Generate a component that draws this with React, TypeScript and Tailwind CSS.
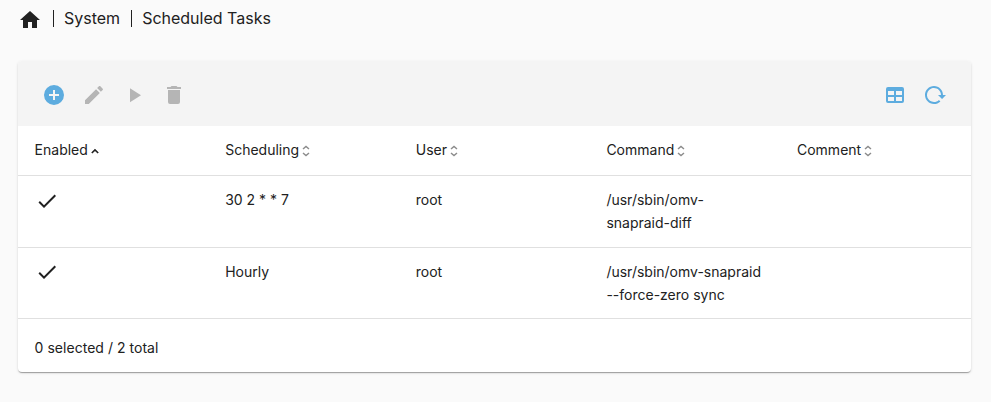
import React from "react";

const icons = {
  home: "M10,20V14H14V20H19V12H22L12,3L2,12H5V20H10Z",
  add: "M17,13H13V17H11V13H7V11H11V7H13V11H17M12,2A10,10 0 0,0 2,12A10,10 0 0,0 12,22A10,10 0 0,0 22,12A10,10 0 0,0 12,2Z",
  edit: "M20.71,7.04C21.1,6.65 21.1,6 20.71,5.63L18.37,3.29C18,2.9 17.35,2.9 16.96,3.29L15.12,5.12L18.87,8.87M3,17.25V21H6.75L17.81,9.93L14.06,6.18L3,17.25Z",
  play: "M8,5.14V19.14L19,12.14L8,5.14Z",
  remove: "M19,4H15.5L14.5,3H9.5L8.5,4H5V6H19M6,19A2,2 0 0,0 8,21H16A2,2 0 0,0 18,19V7H6V19Z",
  table: "M5,4H19A2,2 0 0,1 21,6V18A2,2 0 0,1 19,20H5A2,2 0 0,1 3,18V6A2,2 0 0,1 5,4M5,8V12H11V8H5M13,8V12H19V8H13M5,14V18H11V14H5M13,14V18H19V14H13Z",
  reload: "M2 12C2 16.97 6.03 21 11 21C13.39 21 15.68 20.06 17.4 18.4L15.9 16.9C14.63 18.25 12.86 19 11 19C4.76 19 1.64 11.46 6.05 7.05C10.46 2.64 18 5.77 18 12H15L19 16H19.1L23 12H20C20 7.03 15.97 3 11 3C6.03 3 2 7.03 2 12Z",
  check: "M21,7L9,19L3.5,13.5L4.91,12.09L9,16.17L19.59,5.59L21,7Z",
};

function Icon({ name, className = "" }: { name: keyof typeof icons; className?: string }) {
  return (
    <svg viewBox="0 0 24 24" fill="currentColor" className={`size-6 shrink-0 ${className}`}>
      <path d={icons[name]} />
    </svg>
  );
}

function SortIcon({ sorted }: { sorted: boolean }) {
  return sorted ? (
    <svg viewBox="0 0 8 12" fill="none" stroke="#212121" strokeWidth="1.6" className="ml-[3px] mt-[2px] h-3 w-2">
      <path d="M0.8 8L4 4.9L7.2 8" />
    </svg>
  ) : (
    <svg viewBox="0 0 8 12" fill="none" stroke="#8c8c8c" strokeWidth="1.4" className="ml-[3px] mt-[2px] h-3 w-2">
      <path d="M1 4L4 1.4L7 4M1 8L4 10.6L7 8" />
    </svg>
  );
}

const columns = ["Enabled", "Scheduling", "User", "Command", "Comment"];
const tasks = [
  { schedule: "30 2 * * 7", user: "root", command: ["/usr/sbin/omv-", "snapraid-diff"], height: "h-[72px]", iconOffset: "mt-px" },
  { schedule: "Hourly", user: "root", command: ["/usr/sbin/omv-snapraid", "--force-zero sync"], height: "h-[71px]", iconOffset: "mt-0" },
];

export default function App() {
  return (
    <div className="h-[402px] w-[991px] overflow-hidden bg-[#fafafa] font-['Inter',sans-serif] text-sm text-[#212121]">
      <nav className="flex h-[37px] items-center pl-[18px] text-base">
        <Icon name="home" className="mt-[3px]" />
        <span className="ml-[11px] h-[17px] w-px bg-[#212121]" />
        <span className="mb-[2px] ml-[10px]">System</span>
        <span className="ml-[11px] h-[17px] w-px bg-[#212121]" />
        <span className="mb-[2px] ml-[10px]">Scheduled Tasks</span>
      </nav>
      <main className="mx-[18px] mr-5 mt-6 h-[311px] overflow-hidden rounded bg-white shadow-[0_2px_1px_-1px_rgba(0,0,0,.2),0_1px_1px_0_rgba(0,0,0,.14),0_1px_3px_0_rgba(0,0,0,.12)]">
        <div className="flex h-[65px] items-center gap-4 bg-[#f4f4f4] pl-6 pr-6 pt-[3px] text-[#b5b5b5]">
          <Icon name="add" className="text-[#5dacdf]" />
          <Icon name="edit" />
          <Icon name="play" />
          <Icon name="remove" />
          <Icon name="table" className="ml-auto text-[#5dacdf]" />
          <Icon name="reload" className="text-[#5dacdf]" />
        </div>
        <div className="grid h-[50px] grid-cols-5 items-center border-b border-[#e0e0e0] pb-[2px]">
          {columns.map((column, i) => (
            <div key={column} className="flex items-center pl-[16.6px]">
              {column}
              <SortIcon sorted={i === 0} />
            </div>
          ))}
        </div>
        {tasks.map((task) => (
          <div key={task.schedule} className={`grid grid-cols-5 border-b border-[#e0e0e0] pt-3 leading-[23px] ${task.height}`}>
            <div className="pl-[17px]"><Icon name="check" className={task.iconOffset} /></div>
            <div className="pl-[16.6px]">{task.schedule}</div>
            <div className="pl-[16.6px]">{task.user}</div>
            <div className="whitespace-nowrap pl-[16.6px]">
              {task.command.map((line) => <div key={line}>{line}</div>)}
            </div>
            <div />
          </div>
        ))}
        <div className="flex h-[53px] items-center pl-[16.6px] pt-1 tracking-[0.03px]">0 selected / 2 total</div>
      </main>
    </div>
  );
}
